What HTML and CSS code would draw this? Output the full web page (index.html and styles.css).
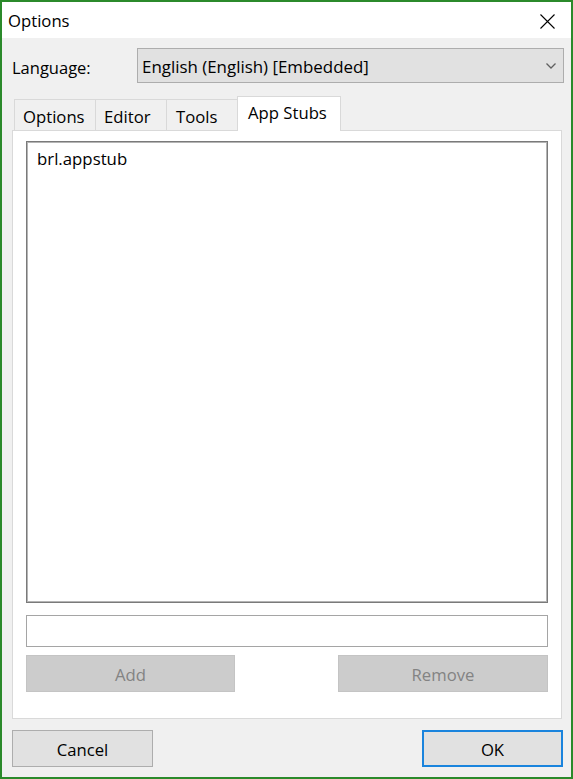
FILE: index.html
```html
<!DOCTYPE html>
<html>
<head>
<meta charset="utf-8">
<title>Options</title>
<link rel="stylesheet" href="styles.css">
</head>
<body>
<div class="window">
  <div class="titlebar">
    <span class="title">Options</span>
    <svg class="close" width="15" height="15" viewBox="0 0 15 15"><path d="M0.5 0.5 L14.5 14.5 M14.5 0.5 L0.5 14.5" stroke="#000" stroke-width="1.1" fill="none"/></svg>
  </div>
  <div class="content">
    <div class="lang-row">
      <span class="lang-label">Language:</span>
      <div class="combo">
        <span>English (English) [Embedded]</span>
        <svg class="chev" width="10" height="6" viewBox="0 0 10 6"><path d="M0.5 0.5 L5 5 L9.5 0.5" stroke="#606060" stroke-width="1.3" fill="none"/></svg>
      </div>
    </div>
    <div class="tabs">
      <div class="tab t1">Options</div>
      <div class="tab t2">Editor</div>
      <div class="tab t3">Tools</div>
      <div class="tab active">App Stubs</div>
    </div>
    <div class="panel">
      <div class="listbox"><div class="item">brl.appstub</div></div>
      <div class="textbox"></div>
      <div class="btn-row">
        <div class="btn disabled add">Add</div>
        <div class="btn disabled remove">Remove</div>
      </div>
    </div>
    <div class="footer">
      <div class="btn normal">Cancel</div>
      <div class="btn normal ok">OK</div>
    </div>
  </div>
</div>
</body>
</html>
```

FILE: styles.css
```css
* { box-sizing: border-box; }
html, body { margin: 0; padding: 0; }
body {
  font-family: "Open Sans", "Noto Sans", sans-serif;
  font-size: 16.5px;
  color: #000;
  background: #fff;
}
.window {
  width: 573px;
  height: 779px;
  border: 2px solid #2b8a2b;
  display: flex;
  flex-direction: column;
  background: #f0f0f0;
}
.titlebar {
  height: 36px;
  background: #fff;
  display: flex;
  align-items: center;
  padding-left: 6px;
  flex-shrink: 0;
}
.title { font-size: 16.7px; line-height: 1; margin-top: 2px; }
.close { margin-left: auto; margin-right: 16px; margin-top: 2px; }
.content {
  flex: 1;
  display: flex;
  flex-direction: column;
  padding: 10px 8px 10px 10px;
  min-height: 0;
}
.lang-row {
  display: flex;
  align-items: center;
  height: 35px;
  flex-shrink: 0;
}
.lang-label { width: 125px; font-size: 16.5px; margin-top: 3px; }
.combo {
  flex: 1;
  height: 35px;
  margin-right: -1px;
  background: #e1e1e1;
  border: 1px solid #adadad;
  display: flex;
  align-items: center;
  padding-left: 4px;
  padding-right: 7px;
  font-size: 16.9px;
}
.combo span { flex: 1; margin-top: 2px; }
.tabs {
  margin-top: 13px;
  height: 34px;
  display: flex;
  align-items: flex-end;
  padding-left: 2px;
  flex-shrink: 0;
}
.tab {
  height: 31px;
  border: 1px solid #d9d9d9;
  border-bottom: none;
  border-right: none;
  background: #f0f0f0;
  padding-left: 8px;
  display: flex;
  align-items: center;
  font-size: 16.7px;
  padding-top: 3px;
}
.t1 { width: 81px; }
.t2 { width: 71px; }
.t3 { width: 71px; padding-left: 9px; }
.active {
  width: 104px;
  height: 35px;
  background: #fff;
  border-right: 1px solid #d9d9d9;
  margin-bottom: -1px;
  position: relative;
  z-index: 1;
  padding-left: 10px;
  padding-top: 0;
  padding-bottom: 3px;
}
.panel {
  flex: 1;
  background: #fff;
  border: 1px solid #d9d9d9;
  margin-right: 1px;
  padding: 10px 13px 26px 13px;
  display: flex;
  flex-direction: column;
  min-height: 0;
}
.listbox {
  flex: 1;
  border: 1px solid #7a7a7a;
  box-shadow: inset 1px 1px 0 #b4b4b4, inset -1px -1px 0 #b4b4b4;
  padding: 6px 10px;
}
.item { font-size: 16.8px; line-height: 22px; }
.textbox {
  height: 32px;
  margin-top: 12px;
  border: 1px solid #a5a5a5;
  background: #fff;
  flex-shrink: 0;
}
.btn-row {
  margin-top: 8px;
  display: flex;
  justify-content: space-between;
  flex-shrink: 0;
}
.btn {
  height: 37px;
  display: flex;
  align-items: center;
  justify-content: center;
  font-size: 16.7px;
  padding-top: 2px;
}
.disabled {
  background: #cccccc;
  border: 1px solid #c4c4c4;
  color: #838383;
}
.add { width: 209px; }
.remove { width: 210px; }
.footer {
  margin-top: 11px;
  display: flex;
  justify-content: space-between;
  flex-shrink: 0;
}
.normal {
  width: 141px;
  background: #e1e1e1;
  border: 1px solid #adadad;
}
.ok {
  border: 2px solid #1a84dd;
}
```
